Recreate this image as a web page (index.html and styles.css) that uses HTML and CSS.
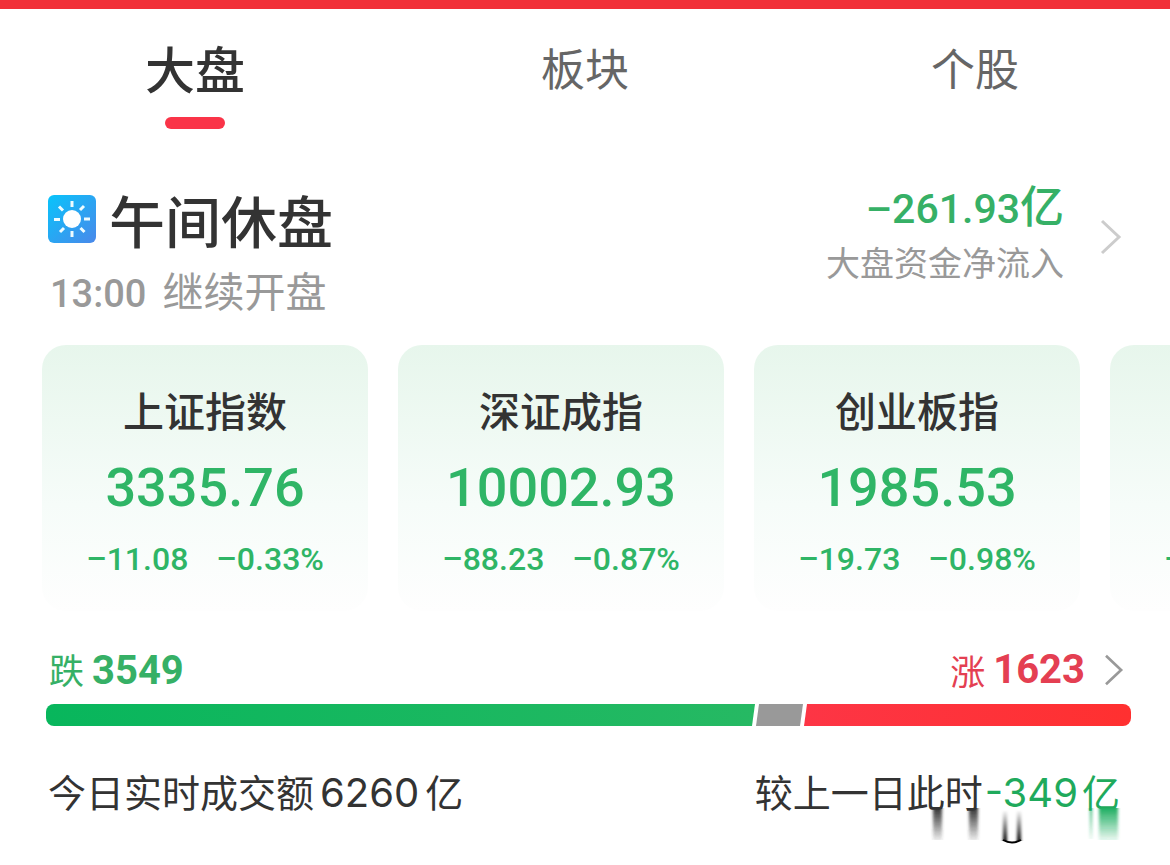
FILE: index.html
```html
<!DOCTYPE html>
<html lang="zh-CN">
<head>
    <meta charset="UTF-8">
    <meta name="viewport" content="width=device-width, initial-scale=1.0">
    <title>大盘</title>
    <link rel="stylesheet" href="styles.css">
</head>
<body>

    <!-- 顶部标签 -->
    <nav class="tabs">
        <button class="tab active">大盘</button>
        <button class="tab">板块</button>
        <button class="tab">个股</button>
    </nav>

    <!-- 市场状态 -->
    <section class="status">
        <div>
            <h1 class="status-title">
                <svg class="sun" viewBox="0 0 48 48" aria-hidden="true">
                    <defs>
                        <linearGradient id="sky" x1="0" y1="0" x2="1" y2="1">
                            <stop offset="0" stop-color="#08c4fb"/>
                            <stop offset="1" stop-color="#4a88ea"/>
                        </linearGradient>
                    </defs>
                    <rect width="48" height="48" rx="6" fill="url(#sky)"/>
                    <circle cx="24" cy="24" r="9" fill="#fff"/>
                    <path d="M24 6v6M24 36v6M6 24.500h6M36 24h6M11 11.500l4 4M32.500 33l4 4M36 11l-4 4M16 33l-4 4" stroke="#eefcff" stroke-width="3"/>
                </svg>
                午间休盘
            </h1>
            <p class="status-sub"><span class="num">13:00</span> <span>继续开盘</span></p>
        </div>
        <a class="flow" href="#">
            <span class="flow-text">
                <span class="flow-value"><span class="num">–261.93</span>亿</span>
                <span class="flow-label">大盘资金净流入</span>
            </span>
            <svg class="arrow arrow-light" viewBox="0 0 22 36" aria-hidden="true"><path d="M2 2l17 16L2 34"/></svg>
        </a>
    </section>

    <!-- 指数卡片 -->
    <section class="cards">
        <article class="card">
            <h2>上证指数</h2>
            <div class="value">3335.76</div>
            <div class="change"><span>–11.08</span><span>–0.33%</span></div>
        </article>
        <article class="card">
            <h2>深证成指</h2>
            <div class="value">10002.93</div>
            <div class="change"><span>–88.23</span><span>–0.87%</span></div>
        </article>
        <article class="card">
            <h2>创业板指</h2>
            <div class="value">1985.53</div>
            <div class="change"><span>–19.73</span><span>–0.98%</span></div>
        </article>
        <article class="card card-next">
            <div class="change"><span>–</span></div>
        </article>
    </section>

    <!-- 涨跌家数 -->
    <section class="breadth">
        <div class="breadth-head">
            <span class="down">跌<b>3549</b></span>
            <a class="up" href="#">涨<b>1623</b>
                <svg class="arrow" viewBox="0 0 22 36" aria-hidden="true"><path d="M2 2l17 16L2 34"/></svg>
            </a>
        </div>
        <div class="bar">
            <div class="bar-down" style="flex-grow: 709"></div>
            <div class="bar-flat" style="flex-grow: 47"></div>
            <div class="bar-up" style="flex-grow: 327"></div>
        </div>
    </section>

    <!-- 成交额 -->
    <section class="turnover">
        <span>今日实时成交额<span class="amount">6260</span>亿</span>
        <span class="compare">较上一日此时<span class="minus"><span class="amount">-349</span>亿</span>
            <svg class="smear" viewBox="0 0 240 36" aria-hidden="true">
                <defs>
                    <linearGradient id="dark" x1="0" y1="0" x2="0" y2="1">
                        <stop offset="0" stop-color="#333"/>
                        <stop offset="1" stop-color="#333" stop-opacity="0.100"/>
                    </linearGradient>
                    <linearGradient id="rise" x1="0" y1="0" x2="0" y2="1">
                        <stop offset="0" stop-color="#000" stop-opacity="0"/>
                        <stop offset="1" stop-color="#000"/>
                    </linearGradient>
                    <linearGradient id="green" x1="0" y1="0" x2="0" y2="1">
                        <stop offset="0" stop-color="#1fae62"/>
                        <stop offset="1" stop-color="#1fae62" stop-opacity="0.100"/>
                    </linearGradient>
                    <filter id="soft" x="-50%" width="200%" y="0" height="100%"><feGaussianBlur stdDeviation="1.500 0"/></filter>
                </defs>
                <g filter="url(#soft)">
                    <rect x="3" y="0" width="9" height="32" fill="url(#dark)"/>
                    <rect x="39" y="0" width="9" height="32" fill="url(#dark)"/>
                    <rect x="73" y="2" width="4" height="31" fill="url(#rise)"/>
                    <rect x="87" y="2" width="4" height="31" fill="url(#rise)"/>
                    <rect x="160" y="0" width="2" height="31" fill="url(#green)"/>
                    <rect x="169" y="0" width="19" height="32" fill="url(#green)"/>
                </g>
                <path d="M73 32q9 5 18 0" fill="none" stroke="#000" stroke-width="2"/>
            </svg>
        </span>
    </section>

</body>
</html>
```
FILE: styles.css
```css
* {
    box-sizing: border-box;
}

body {
    margin: 0;
    min-height: 100vh;
    border-top: 9px solid #f13038;
    font-family: "Noto Sans CJK SC", sans-serif;
    background-color: #fff;
    color: #333;
}

h1, h2, p {
    margin: 0;
    font-weight: 500;
}

a {
    color: inherit;
    text-decoration: none;
}

.num {
    font-family: Roboto, sans-serif;
    font-weight: 500;
}

.tabs {
    display: grid;
    grid-template-columns: repeat(3, 1fr);
    height: 120px;
}

.tab {
    display: flex;
    flex-direction: column;
    align-items: center;
    padding: 24px 0 0;
    border: none;
    background: none;
    font-family: inherit;
    font-size: 44px;
    line-height: 68px;
    color: #666;
    cursor: pointer;
}

.tab.active {
    font-size: 50px;
    font-weight: 500;
    color: #333;
}

.tab.active::after {
    content: "";
    width: 60px;
    height: 12px;
    margin-top: 16px;
    border-radius: 6px;
    background-color: #fa3448;
}

.status {
    display: flex;
    justify-content: space-between;
    padding: 50px 48px 0;
    height: 216px;
}

.status-title {
    display: flex;
    align-items: center;
    gap: 13px;
    font-size: 56px;
    line-height: 80px;
}

.sun {
    width: 48px;
    height: 48px;
}

.status-sub {
    display: flex;
    align-items: baseline;
    gap: 16px;
    padding-left: 2px;
    font-size: 41px;
    font-weight: 400;
    line-height: 60px;
    color: #999;
}

.status-sub .num {
    font-size: 38px;
}

.flow {
    display: flex;
    gap: 36px;
}

.flow-text {
    display: flex;
    flex-direction: column;
    align-items: flex-end;
}

.flow-value {
    font-size: 44px;
    font-weight: 500;
    line-height: 50px;
    color: #36b066;
}

.flow-value .num {
    font-size: 41px;
}

.flow-label {
    font-size: 34px;
    line-height: 56px;
    color: #999;
}

.arrow {
    width: 22px;
    height: 36px;
    fill: none;
    stroke: #999;
    stroke-width: 3;
}

.arrow-light {
    margin-top: 40px;
    stroke: #ccc;
}

.cards {
    display: flex;
    gap: 30px;
    padding-left: 42px;
    overflow: hidden;
}

.card {
    flex: 0 0 326px;
    padding: 34px 0 30px;
    border-radius: 24px;
    background: linear-gradient(#e7f6ec, #f6fcf9 60%, #fefefe);
    text-align: center;
}

.card h2 {
    font-size: 41px;
    line-height: 60px;
}

.value {
    font-family: Roboto, sans-serif;
    font-size: 54px;
    font-weight: 500;
    line-height: 98px;
    color: #2fb566;
}

.change {
    display: flex;
    justify-content: center;
    gap: 28px;
    font-family: Roboto, sans-serif;
    font-size: 32px;
    font-weight: 500;
    line-height: 44px;
    color: #2fb566;
}

.card-next {
    display: flex;
    align-items: flex-end;
    padding-left: 54px;
}

.breadth {
    padding: 30px 39px 0 46px;
}

.breadth-head {
    display: flex;
    justify-content: space-between;
    padding: 0 6px 0 3px;
    font-size: 35px;
    line-height: 56px;
}

.breadth-head b {
    margin-left: 8px;
    font-family: Roboto, sans-serif;
    font-size: 40px;
    font-weight: 700;
}

.down {
    color: #36b066;
}

.up {
    display: flex;
    align-items: center;
    color: #e43f52;
}

.up .arrow {
    height: 32px;
    margin-left: 18px;
}

.bar {
    display: flex;
    gap: 1px;
    height: 22px;
    margin-top: 5px;
    border-radius: 8px;
    overflow: hidden;
}

.bar-down {
    background: linear-gradient(90deg, #08b65c, #26b963);
    clip-path: polygon(0 0, 100% 0, calc(100% - 3px) 100%, 0 100%);
}

.bar-flat {
    background-color: #999;
    clip-path: polygon(3px 0, 100% 0, calc(100% - 3px) 100%, 0 100%);
}

.bar-up {
    background: linear-gradient(90deg, #fd3545, #ff3030);
    clip-path: polygon(3px 0, 100% 0, 100% 100%, 0 100%);
}

.turnover {
    display: flex;
    justify-content: space-between;
    padding: 37px 50px 0 48px;
    font-size: 38px;
    line-height: 56px;
}

.amount {
    margin: 0 6px;
    font-family: Inter, sans-serif;
    font-size: 40px;
}

.compare {
    position: relative;
}

.minus {
    color: #1faa5c;
}

.minus .amount {
    margin: 0 4px 0 2px;
}

/* smudge under the comparison figure */
.smear {
    position: absolute;
    right: -50px;
    top: 45px;
    width: 240px;
    height: 36px;
}
```
